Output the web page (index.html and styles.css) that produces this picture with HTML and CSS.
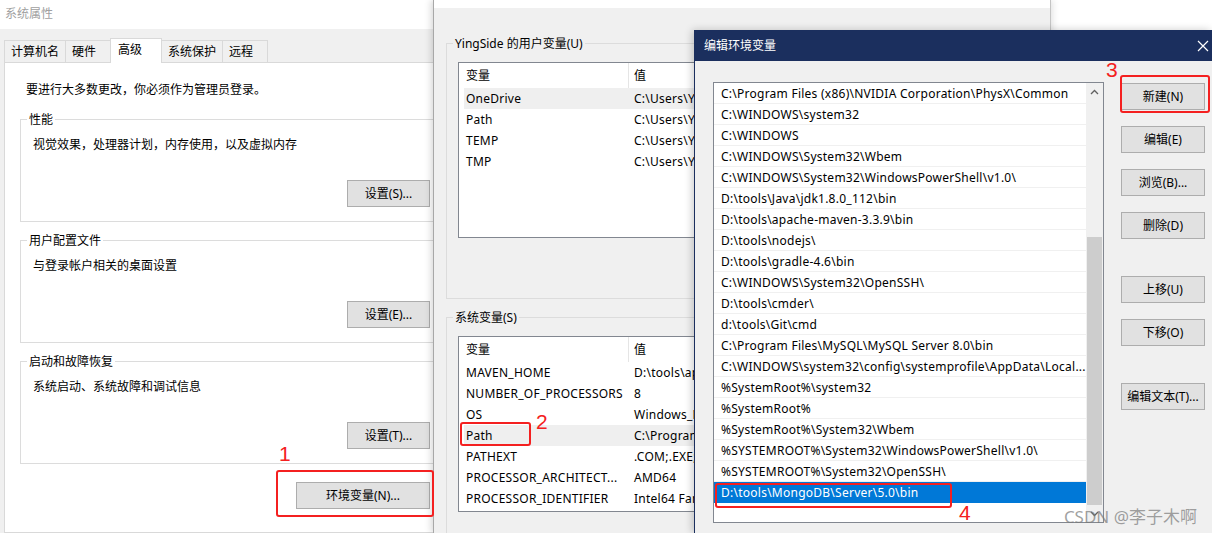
FILE: index.html
```html
<!DOCTYPE html>
<html>
<head>
    <meta charset="utf-8">
    <title>编辑环境变量</title>
    <link rel="stylesheet" href="styles.css">
</head>
<body>

    <!-- 系统属性 -->
    <div class="win sysprops">
        <div class="win-title">系统属性</div>
        <div class="win-body">
            <div class="tabs">
                <div class="tab">计算机名</div>
                <div class="tab">硬件</div>
                <div class="tab active">高级</div>
                <div class="tab">系统保护</div>
                <div class="tab">远程</div>
            </div>
            <div class="tab-panel">
                <p class="note">要进行大多数更改，你必须作为管理员登录。</p>

                <fieldset class="group">
                    <legend>性能</legend>
                    <div class="group-body">
                        <p>视觉效果，处理器计划，内存使用，以及虚拟内存</p>
                        <div class="group-actions"><button class="btn btn-set">设置(S)...</button></div>
                    </div>
                </fieldset>

                <fieldset class="group">
                    <legend>用户配置文件</legend>
                    <div class="group-body">
                        <p>与登录帐户相关的桌面设置</p>
                        <div class="group-actions"><button class="btn btn-set">设置(E)...</button></div>
                    </div>
                </fieldset>

                <fieldset class="group">
                    <legend>启动和故障恢复</legend>
                    <div class="group-body">
                        <p>系统启动、系统故障和调试信息</p>
                        <div class="group-actions"><button class="btn btn-set">设置(T)...</button></div>
                    </div>
                </fieldset>

                <div class="panel-actions"><button class="btn btn-env">环境变量(N)...</button></div>
            </div>
        </div>
    </div>

    <!-- 环境变量 -->
    <div class="win envvars">
        <div class="win-strip"></div>
        <div class="env-body">
            <fieldset class="group group-wide">
                <legend>YingSide 的用户变量(U)</legend>
                <div class="list-wrap">
                    <div class="listview">
                        <div class="lv-head"><span>变量</span><span>值</span></div>
                        <div class="lv-row hover"><span>OneDrive</span><span>C:\Users\YingSide\OneDrive</span></div>
                        <div class="lv-row"><span>Path</span><span>C:\Users\YingSide\AppData\Local\Microsoft\WindowsApps;</span></div>
                        <div class="lv-row"><span>TEMP</span><span>C:\Users\YingSide\AppData\Local\Temp</span></div>
                        <div class="lv-row"><span>TMP</span><span>C:\Users\YingSide\AppData\Local\Temp</span></div>
                    </div>
                </div>
            </fieldset>

            <fieldset class="group group-wide group-sys">
                <legend>系统变量(S)</legend>
                <div class="list-wrap">
                    <div class="listview">
                        <div class="lv-head"><span>变量</span><span>值</span></div>
                        <div class="lv-row"><span>MAVEN_HOME</span><span>D:\tools\apache-maven-3.3.9</span></div>
                        <div class="lv-row"><span>NUMBER_OF_PROCESSORS</span><span>8</span></div>
                        <div class="lv-row"><span>OS</span><span>Windows_NT</span></div>
                        <div class="lv-row hover"><span>Path</span><span>C:\Program Files (x86)\NVIDIA Corporation\PhysX\Common;</span></div>
                        <div class="lv-row"><span>PATHEXT</span><span>.COM;.EXE;.BAT;.CMD;.VBS;.VBE;.JS;.JSE;.WSF;.WSH;.MSC</span></div>
                        <div class="lv-row"><span>PROCESSOR_ARCHITECT...</span><span>AMD64</span></div>
                        <div class="lv-row"><span>PROCESSOR_IDENTIFIER</span><span>Intel64 Family 6 Model 158 Stepping 10, GenuineIntel</span></div>
                    </div>
                </div>
            </fieldset>
        </div>
    </div>

    <!-- 编辑环境变量 -->
    <div class="win editpath">
        <div class="title-bar">
            <span>编辑环境变量</span>
            <svg class="close" width="12" height="12" viewBox="0 0 12 12">
                <path d="M1 1 L11 11 M11 1 L1 11" stroke="#fff" stroke-width="1.2" fill="none"/>
            </svg>
        </div>
        <div class="edit-body">
            <div class="path-list">
                <div class="path-rows">
                    <div class="path-row">C:\Program Files (x86)\NVIDIA Corporation\PhysX\Common</div>
                    <div class="path-row">C:\WINDOWS\system32</div>
                    <div class="path-row">C:\WINDOWS</div>
                    <div class="path-row">C:\WINDOWS\System32\Wbem</div>
                    <div class="path-row">C:\WINDOWS\System32\WindowsPowerShell\v1.0\</div>
                    <div class="path-row">D:\tools\Java\jdk1.8.0_112\bin</div>
                    <div class="path-row">D:\tools\apache-maven-3.3.9\bin</div>
                    <div class="path-row">D:\tools\nodejs\</div>
                    <div class="path-row">D:\tools\gradle-4.6\bin</div>
                    <div class="path-row">C:\WINDOWS\System32\OpenSSH\</div>
                    <div class="path-row">D:\tools\cmder\</div>
                    <div class="path-row">d:\tools\Git\cmd</div>
                    <div class="path-row">C:\Program Files\MySQL\MySQL Server 8.0\bin</div>
                    <div class="path-row">C:\WINDOWS\system32\config\systemprofile\AppData\Local...</div>
                    <div class="path-row">%SystemRoot%\system32</div>
                    <div class="path-row">%SystemRoot%</div>
                    <div class="path-row">%SystemRoot%\System32\Wbem</div>
                    <div class="path-row">%SYSTEMROOT%\System32\WindowsPowerShell\v1.0\</div>
                    <div class="path-row">%SYSTEMROOT%\System32\OpenSSH\</div>
                    <div class="path-row selected">D:\tools\MongoDB\Server\5.0\bin</div>
                </div>
                <div class="scrollbar">
                    <div class="sb-arrow">
                        <svg width="9" height="6" viewBox="0 0 9 6"><path d="M1 5 L4.5 1.5 L8 5" stroke="#606060" stroke-width="1.3" fill="none"/></svg>
                    </div>
                    <div class="sb-track"></div>
                    <div class="sb-thumb"></div>
                    <div class="sb-arrow">
                        <svg width="9" height="6" viewBox="0 0 9 6"><path d="M1 1 L4.5 4.5 L8 1" stroke="#606060" stroke-width="1.3" fill="none"/></svg>
                    </div>
                </div>
            </div>
            <div class="side-buttons">
                <button class="btn">新建(N)</button>
                <button class="btn">编辑(E)</button>
                <button class="btn">浏览(B)...</button>
                <button class="btn">删除(D)</button>
                <button class="btn spaced">上移(U)</button>
                <button class="btn">下移(O)</button>
                <button class="btn spaced">编辑文本(T)...</button>
            </div>
        </div>
    </div>

    <!-- 标注 -->
    <div class="mark mark-1"></div>
    <div class="mark mark-2"></div>
    <div class="mark mark-3"></div>
    <div class="mark mark-4"></div>
    <div class="mark-num num-1">1</div>
    <div class="mark-num num-2">2</div>
    <div class="mark-num num-3">3</div>
    <div class="mark-num num-4">4</div>

    <div class="watermark">CSDN @李子木啊</div>

</body>
</html>
```

FILE: styles.css
```css
* {
    box-sizing: border-box;
}

body {
    margin: 0;
    width: 1212px;
    height: 533px;
    position: relative;
    overflow: hidden;
    background-color: #fff;
    font-family: "Noto Sans", "Noto Sans CJK SC", sans-serif;
    font-size: 12px;
    line-height: 16px;
    color: #000;
}

p {
    margin: 0;
}

.win {
    position: absolute;
    top: 0;
    overflow: hidden;
}

/* buttons */
.btn {
    display: block;
    height: 27px;
    padding: 0;
    background-color: #e1e1e1;
    border: 1px solid #adadad;
    font: inherit;
    color: #000;
    text-align: center;
}

/* group boxes */
.group {
    margin: 0;
    padding: 0;
    border: 1px solid #dcdcdc;
    min-width: 0;
}

.group legend {
    margin-left: 6px;
    padding: 0 2px;
    line-height: 17px;
}

/* ---- 系统属性 ---- */
.sysprops {
    left: 0;
    width: 460px;
    height: 533px;
    background-color: #f0f0f0;
}

.win-title {
    height: 29px;
    line-height: 28px;
    padding-left: 5px;
    background-color: #fff;
    color: #a0a0a0;
}

.sysprops .win-body {
    padding: 9px 0 0 4px;
}

.tabs {
    display: flex;
    align-items: flex-start;
    height: 24px;
    position: relative;
    z-index: 1;
}

.tab {
    height: 22px;
    margin-top: 2px;
    min-width: 46px;
    padding: 0 6px;
    line-height: 21px;
    background-color: #f0f0f0;
    border: 1px solid #d9d9d9;
    border-bottom: none;
    margin-right: -1px;
}

.tab.active {
    height: 25px;
    margin-top: 0;
    min-width: 52px;
    padding: 0 7px;
    line-height: 22px;
    background-color: #fff;
    position: relative;
    z-index: 1;
}

.tab-panel {
    height: 471px;
    background-color: #fff;
    border: 1px solid #d9d9d9;
    padding: 19px 0 0 15px;
}

.note {
    margin: 0 0 13px 6px;
}

.sysprops .group {
    width: 421px;
}

.sysprops .group + .group {
    margin-top: 10px;
}

.group-body {
    padding: 9px 10px 14px 12px;
}

.group-actions {
    display: flex;
    justify-content: flex-end;
    margin-top: 27px;
}

.btn-set {
    width: 83px;
}

.panel-actions {
    width: 421px;
    display: flex;
    justify-content: flex-end;
    padding-right: 11px;
    margin-top: 18px;
}

.btn-env {
    width: 134px;
}

/* ---- 环境变量 ---- */
.envvars {
    left: 433px;
    width: 618px;
    height: 533px;
    background-color: #f0f0f0;
    border-left: 1px solid #a8a8a8;
    border-right: 1px solid #c4c4c4;
    box-shadow: -3px 0 6px rgba(0, 0, 0, 0.12), 3px 0 6px rgba(0, 0, 0, 0.08);
}

.win-strip {
    height: 8px;
    background-color: #fff;
}

.env-body {
    padding: 27px 0 0 12px;
}

.group-wide {
    width: 700px;
}

.group-sys {
    margin-top: 10px;
}

.list-wrap {
    padding: 10px 0 60px 11px;
}

/* the rest of the list lies under the edit dialog */
.listview {
    width: 240px;
    height: 176px;
    background-color: #fff;
    border: 1px solid #828790;
    border-right: none;
    overflow: hidden;
}

.lv-head {
    display: grid;
    grid-template-columns: 170px 1fr;
    height: 25px;
    line-height: 25px;
}

.lv-head span:first-child {
    padding-left: 7px;
    border-right: 1px solid #e5e5e5;
}

.lv-head span:last-child {
    padding-left: 5px;
}

.lv-row {
    display: grid;
    grid-template-columns: 164px 1fr;
    height: 21px;
    line-height: 22px;
    margin-left: 5px;
    white-space: nowrap;
    letter-spacing: 0.25px;
}

.lv-row span {
    overflow: hidden;
}

.lv-row span:first-child {
    padding-left: 2px;
}

.lv-row span:last-child {
    padding-left: 6px;
}

.lv-row.hover {
    background-color: #efefef;
}

/* ---- 编辑环境变量 ---- */
.editpath {
    left: 694px;
    top: 30px;
    width: 518px;
    height: 503px;
    background-color: #f0f0f0;
    border-left: 1px solid #1b2f5e;
    box-shadow: -2px 0 8px rgba(0, 0, 0, 0.2);
}

.title-bar {
    height: 31px;
    display: flex;
    align-items: center;
    justify-content: space-between;
    padding: 1px 3px 0 9px;
    background-color: #1b2f5e;
    color: #fff;
}

.edit-body {
    display: flex;
    align-items: flex-start;
    padding: 21px 0 0 18px;
}

.path-list {
    display: flex;
    width: 391px;
    height: 441px;
    background-color: #fff;
    border: 1px solid #828790;
}

.path-rows {
    flex: 1;
    min-width: 0;
}

.path-row {
    height: 21px;
    padding: 2px 0 0 7px;
    line-height: 18px;
    border-bottom: 1px solid #f0f0f0;
    white-space: nowrap;
    overflow: hidden;
    letter-spacing: 0.25px;
}

.path-row.selected {
    background-color: #0078d7;
    color: #fff;
    border-bottom-color: #0078d7;
}

.scrollbar {
    width: 17px;
    display: flex;
    flex-direction: column;
    background-color: #f0f0f0;
}

.sb-arrow {
    height: 17px;
    display: flex;
    align-items: center;
    justify-content: center;
}

.sb-track {
    flex: 1;
}

.sb-thumb {
    height: 268px;
    margin: 0 1px;
    background-color: #cdcdcd;
}

.side-buttons {
    display: flex;
    flex-direction: column;
    gap: 16px;
    width: 84px;
    margin-left: 17px;
    padding-top: 1px;
}

.side-buttons .btn {
    width: 84px;
}

.side-buttons .spaced {
    margin-top: 21px;
}

/* ---- 标注 ---- */
.mark {
    position: absolute;
    border: 2px solid #f42020;
    border-radius: 3px;
}

.mark-1 {
    left: 276px;
    top: 470px;
    width: 158px;
    height: 47px;
}

.mark-2 {
    left: 460px;
    top: 422px;
    width: 71px;
    height: 24px;
}

.mark-3 {
    left: 1120px;
    top: 75px;
    width: 90px;
    height: 38px;
}

.mark-4 {
    left: 715px;
    top: 483px;
    width: 237px;
    height: 25px;
}

.mark-num {
    position: absolute;
    font-family: "Liberation Sans", sans-serif;
    font-size: 21px;
    line-height: 21px;
    color: #f42020;
}

.num-1 {
    left: 279px;
    top: 443px;
}

.num-2 {
    left: 536px;
    top: 411px;
}

.num-3 {
    left: 1106px;
    top: 59px;
}

.num-4 {
    left: 959px;
    top: 502px;
}

.watermark {
    position: absolute;
    right: 15px;
    bottom: 5px;
    font-size: 17px;
    line-height: 22px;
    color: rgba(120, 120, 120, 0.7);
}
```
